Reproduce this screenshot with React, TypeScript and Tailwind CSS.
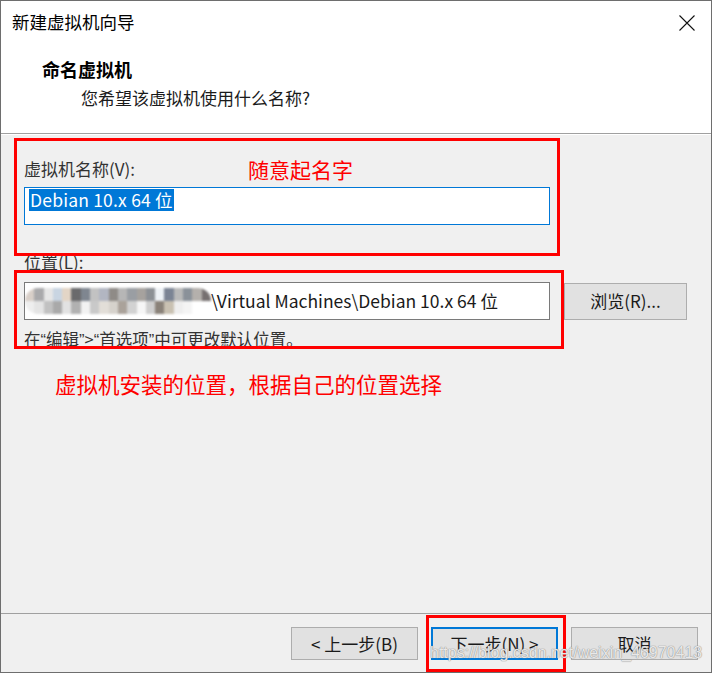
import React from 'react';

const ui = { fontFamily: '"Noto Sans CJK SC", "Microsoft YaHei", sans-serif' };
const latin = { fontFamily: '"Liberation Sans", Arial, sans-serif' };

const row1 = ['#d8cfc8', '#a9a9ab', '#e6e6e6', '#c9d5e2', '#e3d5c6', '#6a6a6c', '#7f8690', '#c2c2c2', '#b2b6c2', '#8f8b87', '#b6b6b6', '#9a9ea3', '#a6a29e', '#8c9095', '#eef2f6', '#7b8494', '#b9b9b9', '#8a9199', '#b4b0ac', '#767070'];
const row2 = ['#eeeeee', '#e4e4e4', '#c1c1c1', '#a9a9a9', '#e2e2e2', '#b1b1b1', '#f2f2f2', '#c9c9c9', '#e2ded8', '#d6d2cc', '#aaa29a', '#d2d2d2', '#f6f6f6', '#cfcfcf', '#8a8279', '#c9c1b2', '#eeeeee', '#f4f4f4', '#ffffff', '#ffffff'];

function Mosaic() {
  return (
    <div className="flex flex-col w-[186px] h-[26px] overflow-hidden rounded-full blur-[0.8px] shrink-0">
      <div className="flex h-[13px]">
        {row1.map((c, i) => <div key={i} className="w-[9.3px] h-full" style={{ background: c }} />)}
      </div>
      <div className="flex h-[13px]">
        {row2.map((c, i) => <div key={i} className="w-[9.3px] h-full" style={{ background: c }} />)}
      </div>
    </div>
  );
}

function WinButton({ children, primary }: { children: React.ReactNode; primary?: boolean }) {
  return (
    <div
      className={
        'w-[127px] h-[33px] flex items-center justify-center bg-[#e1e1e1] text-[17px] text-[#1a1a1a] ' +
        (primary ? 'border-2 border-[#0078d7]' : 'border border-[#adadad]')
      }
    >
      {children}
    </div>
  );
}

// narrow curly quotes like the Windows UI font
const Q = ({ c }: { c: string }) => <span style={latin}>{c}</span>;

export default function App() {
  return (
    <div className="w-[712px] h-[673px] flex flex-col bg-[#f0f0f0] border border-[#6e6e6e] relative overflow-hidden" style={ui}>
      {/* title + header */}
      <div className="h-[133px] bg-white flex flex-col border-b border-[#a0a0a0] shrink-0">
        <div className="h-[42px] flex items-center justify-between pl-[11px] pr-[16px]">
          <span className="text-[17.5px] text-black leading-none">新建虚拟机向导</span>
          <svg width="16" height="16" viewBox="0 0 16 16" className="mt-[1px]">
            <path d="M0.5 0.5 L15.5 15.5 M15.5 0.5 L0.5 15.5" stroke="#111" strokeWidth="1.1" fill="none" />
          </svg>
        </div>
        <div className="pl-[41px] mt-[13px] text-[18px] font-bold text-black leading-[26px]">命名虚拟机</div>
        <div className="pl-[80px] mt-[3px] text-[17px] text-[#1a1a1a] leading-[26px]">您希望该虚拟机使用什么名称?</div>
      </div>

      {/* body */}
      <div className="flex-1 border-t border-white relative pl-[23px]">
        <div className="mt-[22px] text-[17px] leading-6 text-[#333]">虚拟机名称(V):</div>
        <div className="mt-[6px] w-[526px] h-[38px] bg-white border border-[#0078d7] flex items-start pt-[1px] pl-[4px]">
          <span className="bg-[#0078d7] text-white text-[17.5px] leading-[22px] px-[1px] tracking-[0.2px]">Debian 10.x 64 位</span>
        </div>

        <div className="mt-[25px] text-[17px] leading-6 text-[#333]">位置(L):</div>
        <div className="mt-[8px] flex items-center gap-[14px]">
          <div className="w-[526px] h-[38px] bg-white border border-[#7a7a7a] flex items-center overflow-hidden">
            <Mosaic />
            <span className="text-[17.5px] text-[#1a1a1a] whitespace-nowrap">\Virtual Machines\Debian 10.x 64 位</span>
          </div>
          <div className="w-[123px] h-[37px] bg-[#e1e1e1] border border-[#adadad] flex items-center justify-center text-[17px] text-[#1a1a1a]">
            浏览(R)...
          </div>
        </div>
        <div className="mt-[7px] text-[16.5px] leading-6 text-[#333]">
          在<Q c="“" />编辑<Q c="”" />&gt;<Q c="“" />首选项<Q c="”" />中可更改默认位置。
        </div>

        <div className="mt-[17px] pl-[31px] text-[21.5px] leading-[30px] text-[#ff0000]">虚拟机安装的位置，根据自己的位置选择</div>

        {/* annotations */}
        <div className="absolute left-[247px] top-[20px] text-[21px] leading-[28px] text-[#ff0000]">随意起名字</div>
        <div className="absolute left-[13px] top-[3px] w-[546px] h-[118px] border-[3px] border-[#ff0000]" />
        <div className="absolute left-[13px] top-[135px] w-[550px] h-[79px] border-[3px] border-[#ff0000]" />
      </div>

      {/* footer */}
      <div className="h-[59px] shrink-0 border-t border-[#a0a0a0] flex justify-end items-start gap-[13px] pt-[13px] pr-[13px] relative">
        <WinButton>&lt; 上一步(B)</WinButton>
        <WinButton primary>下一步(N) &gt;</WinButton>
        <WinButton>取消</WinButton>
        <div className="absolute left-[425px] top-[1px] w-[140px] h-[57px] border-[3px] border-[#ff0000]" />
        <div
          className="absolute left-[429px] top-[27px] text-[16px] text-white/80 whitespace-nowrap [text-shadow:0_0_1px_#8a8a8a,0_0_1px_#8a8a8a]"
          style={latin}
        >
          https://blog.csdn.net/weixin_46970413
        </div>
      </div>
    </div>
  );
}
